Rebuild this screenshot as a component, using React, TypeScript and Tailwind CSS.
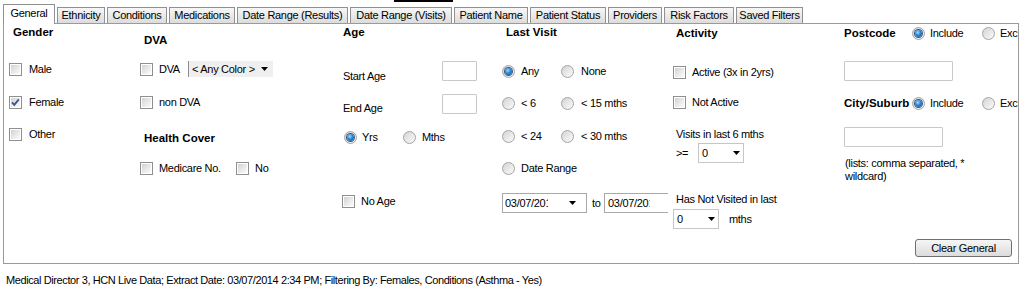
import React from "react";

const T = "text-[11px] leading-[13px] tracking-[-0.3px] whitespace-nowrap";
const B = "text-[11.5px] font-bold leading-[13px] whitespace-nowrap";

function CheckBox({ checked = false }: { checked?: boolean }) {
  return (
    <span className="relative block w-[13px] h-[13px] shrink-0 border border-[#8e8f8f] bg-white">
      <span className="absolute inset-[1px] bg-gradient-to-br from-[#d2d2d2] via-[#e8e8e8] to-[#fbfbfb]" />
      {checked && (
        <svg className="absolute inset-0" width="11" height="11" viewBox="0 0 11 11">
          <path d="M2 5.3 L4.3 7.8 L8.8 2.4" fill="none" stroke="#3f5390" strokeWidth="1.9" />
        </svg>
      )}
    </span>
  );
}

function RadioDot({ checked = false }: { checked?: boolean }) {
  return (
    <span className="relative block w-[13px] h-[13px] shrink-0 rounded-full border border-[#a4a4a4] bg-gradient-to-br from-[#d4d4d4] to-[#fbfbfb]">
      {checked && (
        <span className="absolute left-[2px] top-[2px] w-[7px] h-[7px] rounded-full bg-[radial-gradient(circle_at_40%_35%,#a6dcff_0%,#2a86d6_45%,#0c4f8f_100%)] shadow-[0_0_0_1px_#36597f]" />
      )}
    </span>
  );
}

function Check({ label, checked, gap = "gap-[6px]", w = "" }: { label: string; checked?: boolean; gap?: string; w?: string }) {
  return (
    <div className={`flex items-center ${gap} ${w}`}>
      <CheckBox checked={checked} />
      <span className={T}>{label}</span>
    </div>
  );
}

function Radio({ label, checked, gap = "gap-[6px]", w = "" }: { label: string; checked?: boolean; gap?: string; w?: string }) {
  return (
    <div className={`flex items-center ${gap} ${w}`}>
      <RadioDot checked={checked} />
      <span className={T}>{label}</span>
    </div>
  );
}

function Arrow() {
  return (
    <svg width="7" height="4" viewBox="0 0 7 4" className="shrink-0">
      <polygon points="0,0 7,0 3.5,4" fill="#000" />
    </svg>
  );
}

function Combo({ value }: { value: string }) {
  return (
    <div className="w-[46px] h-[20px] border border-[#c6c6c6] bg-white flex items-center justify-between pl-[3px] pr-[3px]">
      <span className={T}>{value}</span>
      <Arrow />
    </div>
  );
}

function TextBox({ w }: { w: string }) {
  return <div className={`${w} h-[20px] border border-[#c9c9c9] rounded-[1px] bg-white`} />;
}

const tabs: [string, string][] = [
  ["General", "w-[52px]"],
  ["Ethnicity", "w-[50px]"],
  ["Conditions", "w-[62px]"],
  ["Medications", "w-[68px]"],
  ["Date Range (Results)", "w-[113px]"],
  ["Date Range (Visits)", "w-[104px]"],
  ["Patient Name", "w-[76px]"],
  ["Patient Status", "w-[78px]"],
  ["Providers", "w-[56px]"],
  ["Risk Factors", "w-[72px]"],
  ["Saved Filters", "w-[69px]"],
];

export default function App() {
  return (
    <div className="w-[1022px] h-[295px] bg-white text-black overflow-hidden font-['Liberation_Sans',Arial,sans-serif]">
      <div className="h-[2px] flex">
        <div className="ml-[394px] w-[59px] h-[2px] bg-black" />
      </div>
      {/* tab strip */}
      <div className="relative z-10 h-[22px] flex items-end pl-[3px]">
        {tabs.map(([name, w], i) =>
          i === 0 ? (
            <div key={name} className={`${w} h-[20px] border border-b-0 border-[#919191] bg-white flex justify-center pt-[2px]`}>
              <span className={T}>{name}</span>
            </div>
          ) : (
            <div key={name} className={`${w} h-[16px] mb-[1px] pl-[2px]`}>
              <div className="h-full border border-b-0 border-[#919191] bg-gradient-to-b from-[#f7f7f7] to-[#dcdcdc] flex justify-center pt-[1px]">
                <span className={T}>{name}</span>
              </div>
            </div>
          )
        )}
      </div>

      {/* panel */}
      <div className="-mt-[1px] ml-[3px] w-[1016px] h-[241px] border border-[#9a9a9a] flex pl-[5px]">
        {/* Gender */}
        <div className="w-[131px] flex flex-col">
          <div className={`h-[17px] flex items-center pl-[4px] ${B}`}>Gender</div>
          <div className="mt-[18px] h-[20px] flex items-center"><Check label="Male" gap="gap-[7px]" /></div>
          <div className="mt-[13px] h-[20px] flex items-center"><Check label="Female" checked gap="gap-[7px]" /></div>
          <div className="mt-[12px] h-[20px] flex items-center"><Check label="Other" gap="gap-[7px]" /></div>
        </div>

        {/* DVA / Health Cover */}
        <div className="w-[202px] flex flex-col">
          <div className={`mt-[7px] h-[18px] flex items-center pl-[4px] ${B}`}>DVA</div>
          <div className="mt-[10px] h-[20px] flex items-center">
            <Check label="DVA" w="w-[48px]" />
            <div className="w-[85px] h-[16px] border-l border-[#8c8c8c] bg-[#efefef] flex items-center justify-between pl-[3px] pr-[5px]">
              <span className={T}>&lt; Any Color &gt;</span>
              <Arrow />
            </div>
          </div>
          <div className="mt-[13px] h-[20px] flex items-center"><Check label="non DVA" /></div>
          <div className={`mt-[17px] h-[18px] flex items-center pl-[4px] ${B}`}>Health Cover</div>
          <div className="mt-[11px] h-[20px] flex items-center">
            <Check label="Medicare No." w="w-[96px]" />
            <Check label="No" />
          </div>
        </div>

        {/* Age */}
        <div className="w-[158px] flex flex-col">
          <div className={`h-[17px] flex items-center pl-[1px] ${B}`}>Age</div>
          <div className="mt-[20px] h-[20px] flex items-start">
            <span className={`w-[100px] pl-[1px] mt-[9px] ${T}`}>Start Age</span>
            <TextBox w="w-[35px]" />
          </div>
          <div className="mt-[13px] h-[20px] flex items-start">
            <span className={`w-[100px] pl-[1px] mt-[8px] ${T}`}>End Age</span>
            <TextBox w="w-[35px]" />
          </div>
          <div className="mt-[13px] h-[20px] flex items-center pl-[2px]">
            <Radio label="Yrs" checked gap="gap-[5px]" w="w-[59px]" />
            <Radio label="Mths" gap="gap-[6px]" />
          </div>
          <div className="mt-[44px] h-[20px] flex items-center"><Check label="No Age" /></div>
        </div>

        {/* Last Visit */}
        <div className="w-[173px] flex flex-col">
          <div className={`h-[17px] flex items-center pl-[6px] ${B}`}>Last Visit</div>
          <div className="mt-[20px] h-[20px] flex items-center pl-[2px]">
            <Radio label="Any" checked w="w-[59px]" />
            <Radio label="None" gap="gap-[7px]" />
          </div>
          <div className="mt-[12px] h-[20px] flex items-center pl-[2px]">
            <Radio label="< 6" w="w-[59px]" />
            <Radio label="< 15 mths" gap="gap-[7px]" />
          </div>
          <div className="mt-[13px] h-[20px] flex items-center pl-[2px]">
            <Radio label="< 24" w="w-[59px]" />
            <Radio label="< 30 mths" gap="gap-[7px]" />
          </div>
          <div className="mt-[12px] h-[20px] flex items-center pl-[2px]">
            <Radio label="Date Range" />
          </div>
          <div className="mt-[15px] h-[20px] flex items-center pl-[2px]">
            <div className="w-[85px] h-[20px] border border-[#a9a9a9] bg-white flex items-center pl-[2px]">
              <span className={`w-[43px] overflow-hidden ${T}`}>03/07/2014</span>
              <span className="ml-[21px]"><Arrow /></span>
            </div>
            <span className={`w-[17px] pl-[5px] ${T}`}>to</span>
            <div className="w-[64px] h-[20px] border border-r-0 border-[#a9a9a9] bg-white flex items-center pl-[3px]">
              <span className={`w-[42px] overflow-hidden ${T}`}>03/07/2014</span>
            </div>
          </div>
        </div>

        {/* Activity */}
        <div className="w-[171px] flex flex-col">
          <div className={`h-[18px] flex items-center pl-[3px] ${B}`}>Activity</div>
          <div className="mt-[20px] h-[20px] flex items-center"><Check label="Active (3x in 2yrs)" /></div>
          <div className="mt-[10px] h-[20px] flex items-center"><Check label="Not Active" /></div>
          <div className={`mt-[15px] h-[14px] flex items-center pl-[3px] ${T}`}>Visits in last 6 mths</div>
          <div className="mt-[2px] h-[20px] flex items-center">
            <span className={`w-[25px] pl-[3px] ${T}`}>&gt;=</span>
            <Combo value="0" />
          </div>
          <div className={`mt-[29px] h-[14px] flex items-center pl-[3px] ${T}`}>Has Not Visited in last</div>
          <div className="mt-[3px] h-[20px] flex items-center">
            <Combo value="0" />
            <span className={`ml-[10px] ${T}`}>mths</span>
          </div>
        </div>

        {/* Postcode / City */}
        <div className="flex-1 flex flex-col overflow-hidden">
          <div className="h-[18px] flex items-center">
            <span className={`w-[68px] shrink-0 ${B}`}>Postcode</span>
            <Radio label="Include" checked gap="gap-[5px]" w="w-[70px] shrink-0" />
            <Radio label="Exclude" gap="gap-[5px]" w="shrink-0" />
          </div>
          <div className="mt-[19px]"><TextBox w="w-[109px]" /></div>
          <div className="mt-[13px] h-[18px] flex items-center">
            <span className={`w-[68px] shrink-0 ${B}`}>City/Suburb</span>
            <Radio label="Include" checked gap="gap-[5px]" w="w-[70px] shrink-0" />
            <Radio label="Exclude" gap="gap-[5px]" w="shrink-0" />
          </div>
          <div className="mt-[15px]"><TextBox w="w-[99px]" /></div>
          <div className={`mt-[10px] pl-[1px] ${T}`}>
            <div>(lists: comma separated, *</div>
            <div>wildcard)</div>
          </div>
          <div className="mt-[56px] ml-[71px] w-[97px] h-[18px] rounded-[3px] border border-[#707070] bg-gradient-to-b from-[#f6f6f6] to-[#dcdcdc] flex items-center justify-center">
            <span className={T}>Clear General</span>
          </div>
        </div>
      </div>

      <div className="mt-[10px] pl-[6px] text-[11px] leading-[13px] tracking-[-0.4px] whitespace-nowrap">
        Medical Director 3, HCN Live Data; Extract Date: 03/07/2014 2:34 PM; Filtering By: Females, Conditions (Asthma - Yes)
      </div>
    </div>
  );
}
